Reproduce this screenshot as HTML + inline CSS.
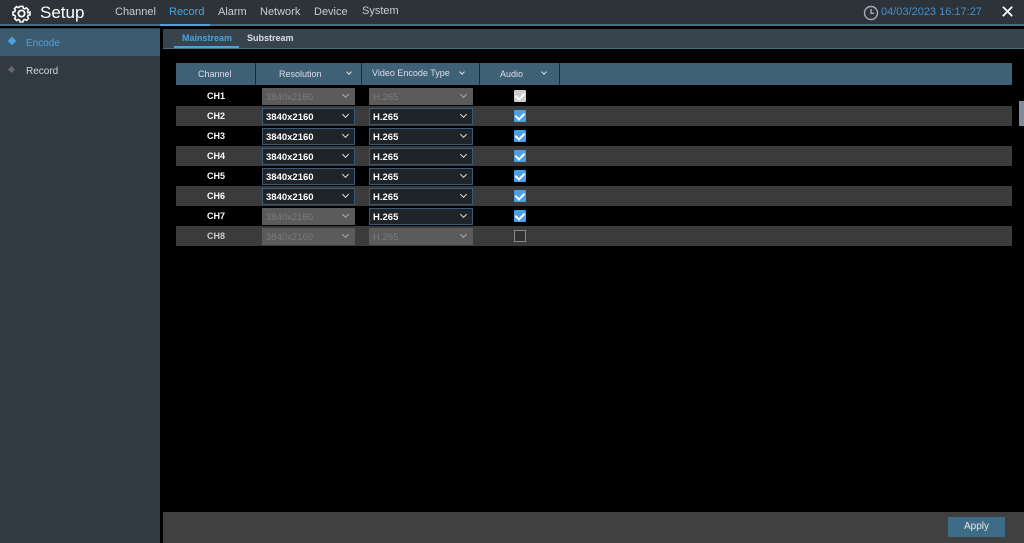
<!DOCTYPE html>
<html><head><style>
*{margin:0;padding:0;box-sizing:border-box}
body{width:1024px;height:543px;background:#000;font-family:"Liberation Sans",sans-serif;position:relative;overflow:hidden;color:#fff}
.abs{position:absolute}
.top{left:0;top:0;width:1024px;height:26px;background:#2c3339;border-bottom:2px solid #4a6b80}
.nav{font-size:11px;color:#c8ccd0;top:6px}
.side{left:0;top:28px;width:160px;height:515px;background:#323a41}
.row{left:176px;width:836px;height:20px}
.g{background:#3b3b3b}
.ch{width:80px;text-align:center;font-size:9px;font-weight:bold;top:5px}
.sel{height:17px;top:2px;background:#1f2428;border:1px solid #3c5a75;font-size:9.5px;font-weight:bold;color:#fff;padding:3px 3px}
.sel.d{background:#5b5b5b;border-color:#5b5b5b;color:#7a7a7a;font-weight:normal}
.sel i{position:absolute;right:6px;top:3px;width:5px;height:5px;border-right:1.5px solid #ddd;border-bottom:1.5px solid #ddd;transform:rotate(45deg)}
.sel.d i{border-color:#aaa}
.cb{left:338px;top:4px;width:12px;height:12px;background:#4a9fe6;border-radius:1px}
.cb:after{content:"";position:absolute;left:3px;top:1px;width:4px;height:7px;border-right:2px solid #fff;border-bottom:2px solid #fff;transform:rotate(45deg)}
.hd{font-size:9px;color:#dde;top:6px}
.hd i{position:absolute;width:4px;height:4px;border-right:1.5px solid #ddd;border-bottom:1.5px solid #ddd;transform:rotate(45deg);top:1px}
</style></head><body>
<div class="abs top"></div>
<svg class="abs" style="left:12px;top:4px" width="19" height="19" viewBox="0 0 24 24"><path d="M10 2h4l.6 2.6 2 .9 2.3-1.4 2.8 2.8-1.4 2.3.9 2L24 10v4l-2.6.6-.9 2 1.4 2.3-2.8 2.8-2.3-1.4-2 .9L14 24h-4l-.6-2.6-2-.9-2.3 1.4-2.8-2.8 1.4-2.3-.9-2L0 14v-4l2.6-.6.9-2-1.4-2.3 2.8-2.8 2.3 1.4 2-.9z" fill="none" stroke="#fff" stroke-width="2.2" transform="scale(.9) translate(1.3 1.3)"/><circle cx="12" cy="12" r="4" fill="none" stroke="#fff" stroke-width="2.2"/></svg>
<div class="abs" style="left:40px;top:3px;font-size:17px;color:#fff">Setup</div>
<div class="abs nav" style="left:115px">Channel</div>
<div class="abs nav" style="left:169px;color:#4aa3e0">Record</div>
<div class="abs" style="left:160px;top:24px;width:50px;height:2px;background:#4aa3e0"></div>
<div class="abs nav" style="left:218px">Alarm</div>
<div class="abs nav" style="left:260px">Network</div>
<div class="abs nav" style="left:314px">Device</div>
<div class="abs nav" style="left:362px;top:5px">System</div>
<svg class="abs" style="left:863px;top:5px" width="16" height="16" viewBox="0 0 16 16"><circle cx="8" cy="8" r="6.5" fill="none" stroke="#aab" stroke-width="1.4"/><path d="M8 4v4.3h3" fill="none" stroke="#aab" stroke-width="1.4"/></svg>
<div class="abs" style="left:881px;top:6px;font-size:11px;color:#4a8fc8">04/03/2023 16:17:27</div>
<div class="abs" style="left:1000px;top:2px;font-size:18px;color:#fff">✕</div>
<div class="abs side"></div>
<div class="abs" style="left:0;top:29px;width:160px;height:27px;background:#3d5b6e"></div>
<div class="abs" style="left:9px;top:38px;width:6px;height:6px;background:#4aa3e0;transform:rotate(45deg)"></div>
<div class="abs" style="left:26px;top:38px;font-size:10px;color:#4aa3e0">Encode</div>
<div class="abs" style="left:9px;top:67px;width:5px;height:5px;background:#667;transform:rotate(45deg)"></div>
<div class="abs" style="left:26px;top:66px;font-size:10px;color:#d0d4d8">Record</div>
<div class="abs" style="left:163px;top:29px;width:861px;height:20px;background:#37444e;border-bottom:1px solid #4a6b80"></div>
<div class="abs" style="left:182px;top:33px;font-size:9px;font-weight:bold;color:#4aa3e0">Mainstream</div>
<div class="abs" style="left:174px;top:46px;width:65px;height:2px;background:#4aa3e0"></div>
<div class="abs" style="left:247px;top:33px;font-size:9px;font-weight:bold;color:#dde">Substream</div>
<div class="abs" style="left:176px;top:63px;width:836px;height:22px;background:#3f6175"></div>
<div class="abs" style="left:255px;top:63px;width:1px;height:22px;background:#1b2a33"></div>
<div class="abs" style="left:361px;top:63px;width:1px;height:22px;background:#1b2a33"></div>
<div class="abs" style="left:479px;top:63px;width:1px;height:22px;background:#1b2a33"></div>
<div class="abs" style="left:559px;top:63px;width:1px;height:22px;background:#1b2a33"></div>
<div class="abs" style="left:176px;top:63px">
<div class="abs hd" style="left:22px">Channel</div>
<div class="abs hd" style="left:103px;width:80px">Resolution<i style="left:68px"></i></div>
<div class="abs hd" style="left:196px;top:5px;width:105px">Video Encode Type<i style="left:88px;top:2px"></i></div>
<div class="abs hd" style="left:324px;width:50px">Audio<i style="left:42px"></i></div>
</div>
<div class="abs row" style="top:86px"><div class="abs ch">CH1</div><div class="abs sel d" style="left:86px;width:93px">3840x2160<i></i></div><div class="abs sel d" style="left:193px;width:104px">H.265<i></i></div><div class="abs cb" style="background:#ccc"></div></div>
<div class="abs row g" style="top:106px"><div class="abs ch">CH2</div><div class="abs sel" style="left:86px;width:93px">3840x2160<i></i></div><div class="abs sel" style="left:193px;width:104px">H.265<i></i></div><div class="abs cb"></div></div>
<div class="abs row" style="top:126px"><div class="abs ch">CH3</div><div class="abs sel" style="left:86px;width:93px">3840x2160<i></i></div><div class="abs sel" style="left:193px;width:104px">H.265<i></i></div><div class="abs cb"></div></div>
<div class="abs row g" style="top:146px"><div class="abs ch">CH4</div><div class="abs sel" style="left:86px;width:93px">3840x2160<i></i></div><div class="abs sel" style="left:193px;width:104px">H.265<i></i></div><div class="abs cb"></div></div>
<div class="abs row" style="top:166px"><div class="abs ch">CH5</div><div class="abs sel" style="left:86px;width:93px">3840x2160<i></i></div><div class="abs sel" style="left:193px;width:104px">H.265<i></i></div><div class="abs cb"></div></div>
<div class="abs row g" style="top:186px"><div class="abs ch">CH6</div><div class="abs sel" style="left:86px;width:93px">3840x2160<i></i></div><div class="abs sel" style="left:193px;width:104px">H.265<i></i></div><div class="abs cb"></div></div>
<div class="abs row" style="top:206px"><div class="abs ch">CH7</div><div class="abs sel d" style="left:86px;width:93px">3840x2160<i></i></div><div class="abs sel" style="left:193px;width:104px">H.265<i></i></div><div class="abs cb"></div></div>
<div class="abs row g" style="top:226px"><div class="abs ch" style="color:#ccc">CH8</div><div class="abs sel d" style="left:86px;width:93px">3840x2160<i></i></div><div class="abs sel d" style="left:193px;width:104px">H.265<i></i></div><div class="abs" style="left:338px;top:4px;width:12px;height:12px;border:1px solid #888;background:#333"></div></div>
<div class="abs" style="left:1019px;top:101px;width:5px;height:25px;background:#7f8c9a"></div>
<div class="abs" style="left:163px;top:512px;width:861px;height:31px;background:#404040"></div>
<div class="abs" style="left:948px;top:517px;width:57px;height:20px;background:#3e6b85;font-size:10px;color:#e4e8ec;text-align:center;line-height:20px">Apply</div>
</body></html>
